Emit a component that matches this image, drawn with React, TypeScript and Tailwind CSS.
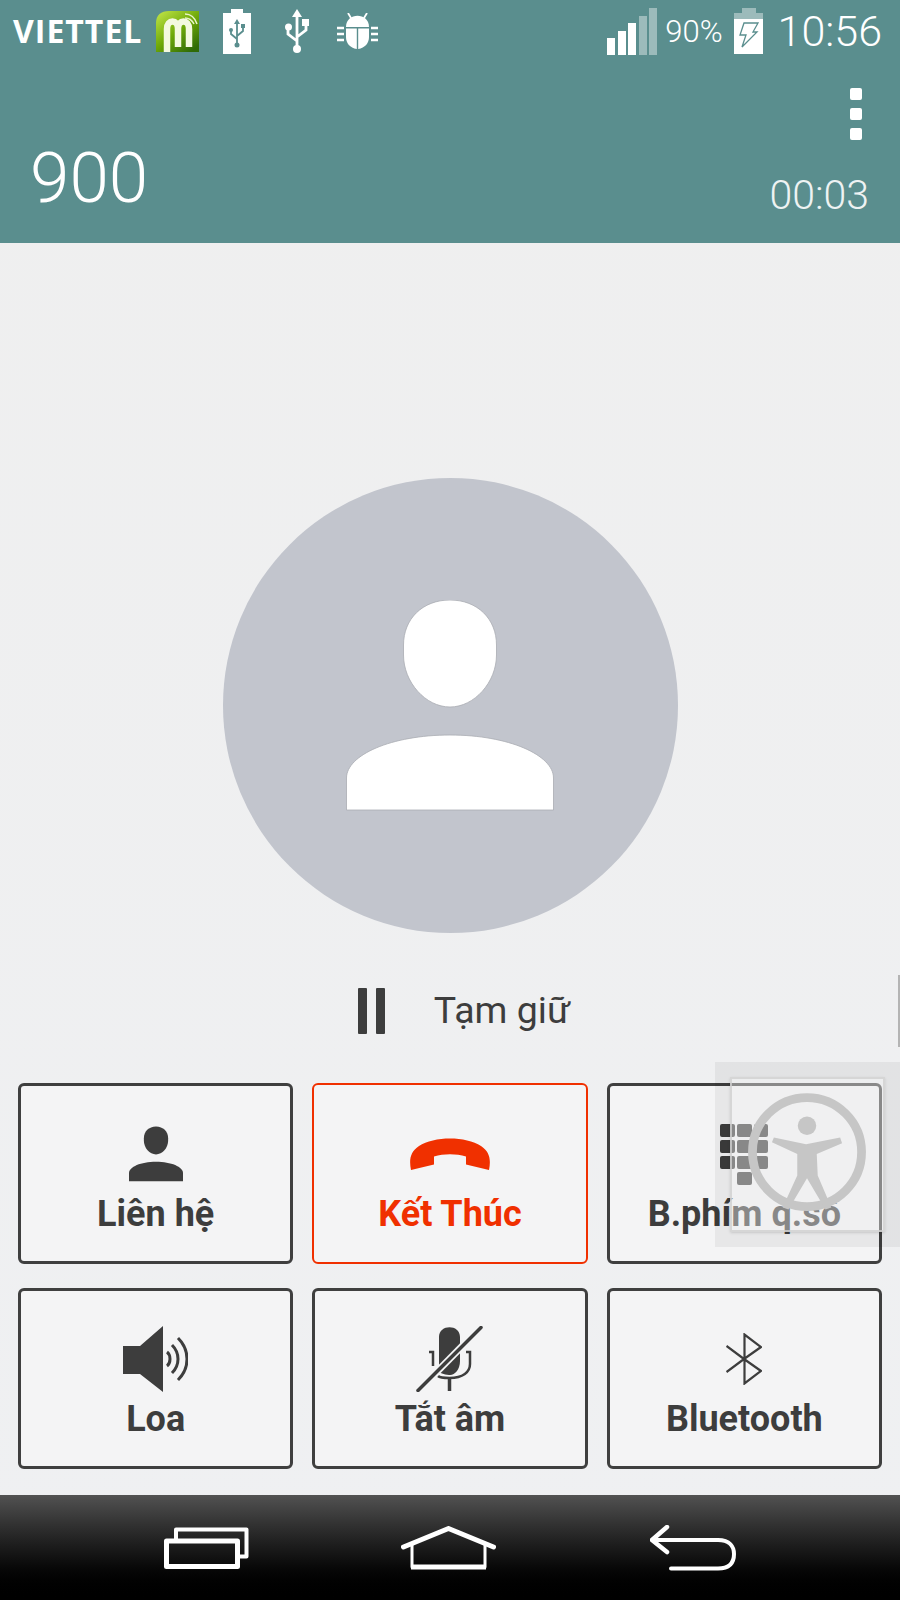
import React from 'react';

const PersonGlyph = ({ className, stroke }: { className: string; stroke?: string }) => (
  <svg viewBox="0 0 207 211" className={className} fill="currentColor" stroke={stroke} strokeWidth={stroke ? 0.8 : 0}>
    <path d="M103.5 0C131 0 150 19 150 45V55C150 82 128 107 103.5 107C79 107 57 82 57 55V45C57 19 76 0 103.5 0Z" />
    <path d="M0 210V178C0 155 45 135 103.5 135C162 135 207 155 207 178V210Z" />
  </svg>
);

const PhoneDown = () => (
  <svg viewBox="0 0 80 32" className="w-[80px] h-[32px]" fill="#f03000">
    <path d="M1 32C-1 22 0 14 9 8C24 -2 56 -2 71 8C80 14 81 22 79 32L56 26.500V18.500C46 15.500 34 15.500 24 18.500V26.500Z" />
  </svg>
);

const Keypad = () => (
  <div className="grid grid-cols-3 gap-x-[2px] gap-y-[3px] w-[48px]">
    {Array.from({ length: 9 }).map((_, i) => (
      <div key={i} className="h-[13px] rounded-[2px] bg-[#3d3d3d]" />
    ))}
    <div className="h-[13px] rounded-[2px] bg-[#3d3d3d] col-start-2" />
  </div>
);

const Speaker = () => (
  <svg viewBox="0 0 65 66" className="w-[65px] h-[66px]" fill="none" stroke="#3d3d3d">
    <path d="M0 20H17L40 0V66L17 48H0Z" fill="#3d3d3d" stroke="none" />
    <path d="M44 26C48 29 48 37 44 40" strokeWidth="3" />
    <path d="M49 19C57 27 57 39 49 47" strokeWidth="3" />
    <path d="M55 12C67 24 67 42 55 54" strokeWidth="3" />
  </svg>
);

const MicOff = () => (
  <svg viewBox="0 0 67 66" className="w-[67px] h-[66px]" fill="none" stroke="#3d3d3d">
    <path d="M23 46V11C23 -2 44 -2 44 11V35C44 44 38 50 33 49C28 49 23 46 23 46Z" fill="#3d3d3d" stroke="none" />
    <path d="M13 26H17V40M50 26H54V38C54 46 47 52 33.500 52C27 52 23 51 22 50" strokeWidth="2.500" />
    <path d="M33.500 52V65" strokeWidth="3.500" />
    <path d="M65 1L2 65" stroke="#f3f4f5" strokeWidth="7" />
    <path d="M65 1.500L2 64.500" strokeWidth="3.500" strokeLinecap="round" />
  </svg>
);

const Bluetooth = () => (
  <svg viewBox="0 0 36 52" className="w-[36px] h-[52px]" fill="none" stroke="#3d3d3d" strokeWidth="2.200">
    <path d="M0.500 13L18 26L35 38L18.500 50.500V1.500L35 14L18 26L0.500 39" />
  </svg>
);

const buttons = [
  { label: 'Liên hệ', icon: <PersonGlyph className="w-[54px] h-[56px] text-[#3d3d3d]" /> },
  { label: 'Kết Thúc', icon: <PhoneDown />, red: true },
  { label: 'B.phím q.số', icon: <Keypad /> },
  { label: 'Loa', icon: <Speaker /> },
  { label: 'Tắt âm', icon: <MicOff /> },
  { label: 'Bluetooth', icon: <Bluetooth /> },
];

const StatusLeft = () => (
  <div className="flex items-center">
    <span className="w-[129px] font-['Open_Sans'] font-bold text-[32px] leading-none text-white tracking-[1px] whitespace-nowrap">VIETTEL</span>
    <svg viewBox="0 0 43 41" className="w-[43px] h-[41px] ml-[14px]">
      <defs>
        <linearGradient id="mgreen" x1="0" y1="0" x2="0.8" y2="1">
          <stop offset="0" stopColor="#c4e84a" />
          <stop offset="0.55" stopColor="#6ea808" />
          <stop offset="1" stopColor="#2f6a06" />
        </linearGradient>
      </defs>
      <path d="M0 41V12C0 4 5 0 13 0H43V41Z" fill="url(#mgreen)" />
      <path d="M11 41V18C11 8 22 8 22 18V36M22 18C22 8 33 8 33 18V36" fill="none" stroke="#f4f9e0" strokeWidth="6.500" />
      <path d="M29 3C35 3 39 7 41 13M29 7C33 7 36 9 38 13" fill="none" stroke="#e8f4c8" strokeWidth="1.500" />
    </svg>
    <svg viewBox="0 0 28 45" className="w-[28px] h-[45px] ml-[24px]">
      <path d="M8 0H20V4H28V45H0V4H8Z" fill="#fff" />
      <path d="M14 12V35M14 30L8 25V22M14 27L20 22V18" fill="none" stroke="#5a8e8e" strokeWidth="1.800" />
      <circle cx="14" cy="36" r="2.500" fill="#5a8e8e" />
      <path d="M14 10L11 15H17Z" fill="#5a8e8e" />
      <circle cx="8" cy="21" r="2" fill="#5a8e8e" />
      <rect x="18" y="15" width="4" height="4" fill="#5a8e8e" />
    </svg>
    <svg viewBox="0 0 24 44" className="w-[24px] h-[44px] ml-[34px]">
      <path d="M12 4V38M12 32L3 25V20M12 28L21 21V14" fill="none" stroke="#fff" strokeWidth="2.800" />
      <path d="M12 0L7 8H17Z" fill="#fff" />
      <circle cx="12" cy="40" r="4" fill="#fff" />
      <circle cx="3.500" cy="18" r="3.500" fill="#fff" />
      <rect x="17" y="10" width="7" height="7" fill="#fff" />
    </svg>
    <svg viewBox="0 0 41 36" className="w-[41px] h-[36px] ml-[28px]">
      <path d="M11 0L14 5M30 0L27 5" stroke="#fff" strokeWidth="1.800" />
      <path d="M9 14C9 -1 32 -1 32 14Z" fill="#fff" />
      <path d="M9 15.500H19.800V36C13 35 9 30 9 24ZM21.200 15.500H32V24C32 30 28 35 21.200 36Z" fill="#fff" />
      <path d="M0 15H7M34 15H41M0 21H7M34 21H41M0 27H7M34 27H41" stroke="#fff" strokeWidth="2.600" />
    </svg>
  </div>
);

const StatusRight = () => (
  <div className="flex items-center">
    <div className="flex items-end gap-[2.500px] h-[47px]">
      <div className="w-[8px] h-[17px] bg-white" />
      <div className="w-[8px] h-[24px] bg-white" />
      <div className="w-[8px] h-[32px] bg-white" />
      <div className="w-[8px] h-[39px] bg-white/40" />
      <div className="w-[8px] h-[47px] bg-white/40" />
    </div>
    <span className="ml-[8px] font-['Roboto'] font-light text-[31px] leading-none text-white">90%</span>
    <svg viewBox="0 0 29 46" className="w-[29px] h-[46px] ml-[11px]">
      <path d="M8 0H22V5H8Z" fill="#fff" fillOpacity="0.4" />
      <path d="M0 5H29V12H0Z" fill="#fff" fillOpacity="0.4" />
      <path d="M0 11H29V46H0Z" fill="#fff" />
      <path d="M10 15H24L19 24H23L8 39L12 27H6Z" fill="none" stroke="#5a8e8e" strokeWidth="1.300" />
    </svg>
    <span className="ml-[15px] font-['Roboto'] font-light text-[43px] leading-none text-white">10:56</span>
  </div>
);

const NavIcons = () => (
  <div className="flex items-center justify-center gap-[152px] h-[105px] bg-gradient-to-b from-[#525252] via-[#111111] via-60% to-black">
    <svg viewBox="0 0 85 42" className="w-[85px] h-[42px]" fill="none" stroke="#fff" strokeWidth="5" strokeLinejoin="round">
      <rect x="2.500" y="14" width="71" height="25.500" strokeWidth="5" />
      <path d="M12 12V2.500H82.500V29.500H75" strokeWidth="4" />
    </svg>
    <svg viewBox="0 0 95 44" className="w-[95px] h-[44px]" fill="none" stroke="#fff" strokeLinejoin="round">
      <path d="M2.500 21L47.500 2.500L92.500 21" strokeWidth="5" strokeLinecap="round" />
      <path d="M11 18V41H84V18" strokeWidth="3" />
      <path d="M10 41H85" strokeWidth="5" />
    </svg>
    <svg viewBox="0 0 86 46" className="w-[86px] h-[46px] ml-[2px]" fill="none" stroke="#fff" strokeLinecap="round">
      <path d="M17 2L2 15L17 27" strokeWidth="4.500" strokeLinejoin="round" />
      <path d="M4 15H68C80 15 84 22 84 29C84 37 80 43.500 68 43.500H21" strokeWidth="4" />
    </svg>
  </div>
);

export default function App() {
  return (
    <div className="relative w-[900px] h-[1600px] overflow-hidden flex flex-col bg-gradient-to-b from-[#efefef] to-[#eff0f2] font-['Roboto',sans-serif]">
      {/* header */}
      <div className="h-[243px] bg-[#5a8e8e] flex flex-col">
        <div className="flex items-center justify-between h-[62px] pl-[13px] pr-[18px]">
          <StatusLeft />
          <StatusRight />
        </div>
        <div className="flex-1 flex items-end justify-between pl-[30px] pr-[31px] pb-[30px]">
          <span className="font-['Roboto'] font-light text-[71px] leading-[70px] text-white">900</span>
          <div className="flex flex-col items-end">
            <div className="flex flex-col gap-[8px] mr-[7px]">
              <div className="w-[12px] h-[12px] rounded-[2px] bg-white" />
              <div className="w-[12px] h-[12px] rounded-[2px] bg-white" />
              <div className="w-[12px] h-[12px] rounded-[2px] bg-white" />
            </div>
            <span className="font-['Roboto'] font-light text-[41px] leading-[40px] text-[#eef3f3] mt-[35px] mb-[-2px]">00:03</span>
          </div>
        </div>
      </div>

      {/* photo */}
      <div className="flex justify-center mt-[235px]">
        <div className="w-[455px] h-[455px] rounded-full bg-[#c2c5cd] flex items-center justify-center">
          <PersonGlyph className="w-[208px] h-[211px] text-white" stroke="#a9acb3" />
        </div>
      </div>

      {/* hold */}
      <div className="flex items-center justify-center h-[54px] mt-[51px] pl-[28px] text-[#3d3d3d]">
        <div className="flex gap-[9px] h-[46px]">
          <div className="w-[9px] rounded-[1px] bg-[#3d3d3d]" />
          <div className="w-[9px] rounded-[1px] bg-[#3d3d3d]" />
        </div>
        <span className="ml-[49px] text-[37.500px] leading-none font-normal">Tạm giữ</span>
      </div>

      {/* buttons */}
      <div className="grid grid-cols-3 gap-x-[19px] gap-y-[24px] px-[18px] mt-[45px]">
        {buttons.map((b) => (
          <div
            key={b.label}
            className={`h-[181px] rounded-[6px] bg-[#f4f4f5] flex flex-col items-center ${
              b.red ? 'border-2 border-[#f03000] pt-[36px]' : 'border-[3px] border-[#3f3f3f] pt-[35px]'
            }`}
          >
            <div className="h-[66px] flex items-center justify-center">{b.icon}</div>
            <span className={`mt-[7px] text-[36px] leading-[40px] font-bold ${b.red ? 'text-[#f03000]' : 'text-[#3d3d3d]'}`}>
              {b.label}
            </span>
          </div>
        ))}
      </div>

      <div className="flex-1" />
      <NavIcons />

      {/* accessibility overlay */}
      <div className="absolute left-[715px] top-[1062px] w-[185px] h-[185px] bg-black/5">
        <div className="absolute left-[15px] top-[15px] w-[155px] h-[155px] bg-white/40 border-2 border-[#cfcfcf]/80 shadow-sm">
          <svg viewBox="0 0 155 155" className="w-full h-full">
            <circle cx="77" cy="75" r="56" fill="none" stroke="#c6c6c6" strokeWidth="9" />
            <circle cx="77" cy="48" r="9.500" fill="#c6c6c6" />
            <path d="M43 60L76 67L111 60L113 66L87 77L88 99L102 132L96 134L77 102L58 134L52 132L67 99L67 77L41 65Z" fill="#c6c6c6" />
          </svg>
        </div>
      </div>
      <div className="absolute right-0 top-[975px] w-[2px] h-[72px] bg-[#b4b4b4]" />
    </div>
  );
}
